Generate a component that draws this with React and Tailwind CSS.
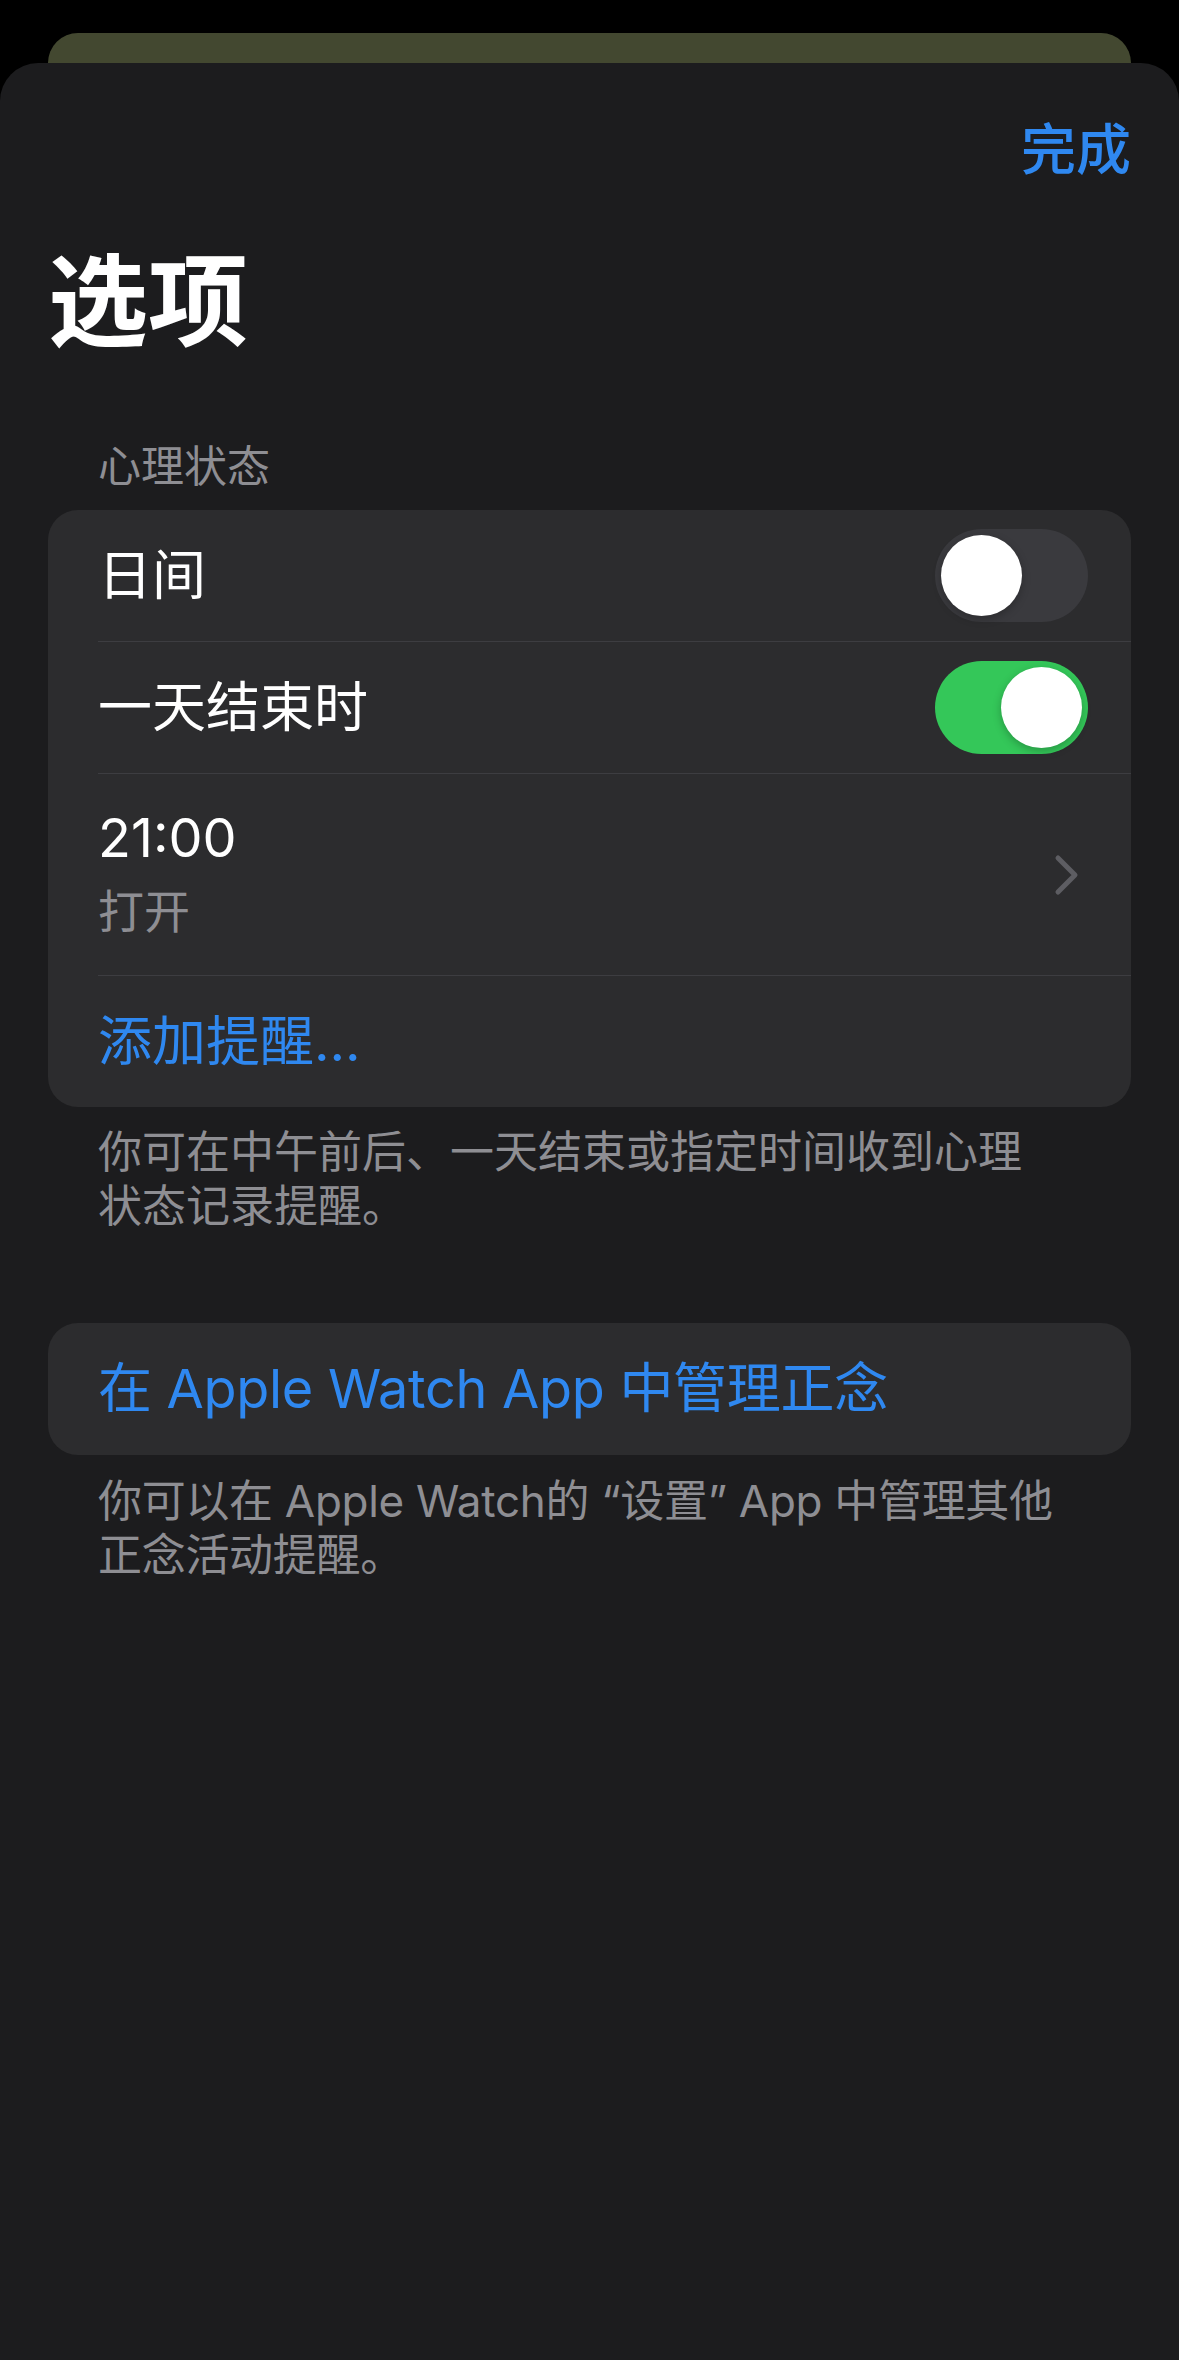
import React, { useState } from 'react';

const font = { fontFamily: 'Inter, "Noto Sans CJK SC", sans-serif' };

const Toggle = ({ on, onClick }) => (
  <button
    onClick={onClick}
    className={`flex h-[93px] w-[153px] items-center rounded-full p-[6px] ${
      on ? 'justify-end bg-[#34c759]' : 'justify-start bg-[#3a3a3e]'
    }`}
  >
    <span className="block h-[81px] w-[81px] rounded-full bg-white shadow-[0_3px_8px_rgba(0,0,0,0.25)]" />
  </button>
);

const Separator = () => <div className="ml-[50px] h-px bg-[#3d3d41]" />;

const App = () => {
  const [daytime, setDaytime] = useState(false);
  const [endOfDay, setEndOfDay] = useState(true);

  return (
    <div className="h-[2360px] w-full overflow-hidden bg-black" style={font}>
      {/* sheet behind */}
      <div className="mx-[48px] mt-[33px] h-[30px] rounded-t-[30px] bg-[#434830]" />

      <div className="h-[2297px] rounded-t-[38px] bg-[#1c1c1e] px-[48px]">
        {/* Done */}
        <div className="flex justify-end pt-[56px]">
          <button className="h-[60px] text-[55px] font-medium leading-[60px] text-[#2f88f0]">完成</button>
        </div>

        {/* Title */}
        <h1 className="mt-[68px] text-[100px] font-bold leading-[110px] text-white">选项</h1>

        {/* Section header */}
        <div className="mt-[84px] pl-[50px] text-[43px] leading-[50px] text-[#8e8e93]">心理状态</div>

        {/* State of mind card */}
        <div className="mt-[19px] overflow-hidden rounded-[30px] bg-[#2c2c2e]">
          <div className="flex h-[131px] items-center justify-between pl-[50px] pr-[43px]">
            <span className="text-[54px] leading-[64px] text-white">日间</span>
            <Toggle on={daytime} onClick={() => setDaytime(!daytime)} />
          </div>
          <Separator />
          <div className="flex h-[131px] items-center justify-between pl-[50px] pr-[43px]">
            <span className="text-[54px] leading-[64px] text-white">一天结束时</span>
            <Toggle on={endOfDay} onClick={() => setEndOfDay(!endOfDay)} />
          </div>
          <Separator />
          <div className="flex h-[201px] items-center justify-between pl-[50px] pr-[51px]">
            <div className="flex flex-col">
              <span className="text-[54px] leading-[64px] text-white">21:00</span>
              <span className="mt-[9px] text-[46px] leading-[64px] text-[#8e8e93]">打开</span>
            </div>
            <svg width="26" height="42" viewBox="0 0 26 42" fill="none">
              <path d="M4 4 L21 21 L4 38" stroke="#5d5d62" strokeWidth="5" strokeLinecap="round" strokeLinejoin="round" />
            </svg>
          </div>
          <Separator />
          <div className="flex h-[131px] items-center pl-[50px]">
            <span className="text-[54px] leading-[64px] text-[#2f88f0]">添加提醒...</span>
          </div>
        </div>

        <p className="mt-[18px] pl-[50px] text-[44px] leading-[54px] text-[#8e8e93]">
          你可在中午前后、一天结束或指定时间收到心理
          <br />
          状态记录提醒。
        </p>

        {/* Mindfulness card */}
        <div className="mt-[90px] flex h-[132px] items-center rounded-[30px] bg-[#2c2c2e] pl-[50px]">
          <span className="text-[54px] leading-[64px] tracking-[-0.3px] text-[#2f88f0]">在 Apple Watch App 中管理正念</span>
        </div>

        <p className="mt-[19px] pl-[50px] text-[44px] leading-[54px] tracking-[-0.3px] text-[#8e8e93]">
          你可以在 Apple Watch的 “设置” App 中管理其他
          <br />
          正念活动提醒。
        </p>
      </div>
    </div>
  );
};

export default App;
